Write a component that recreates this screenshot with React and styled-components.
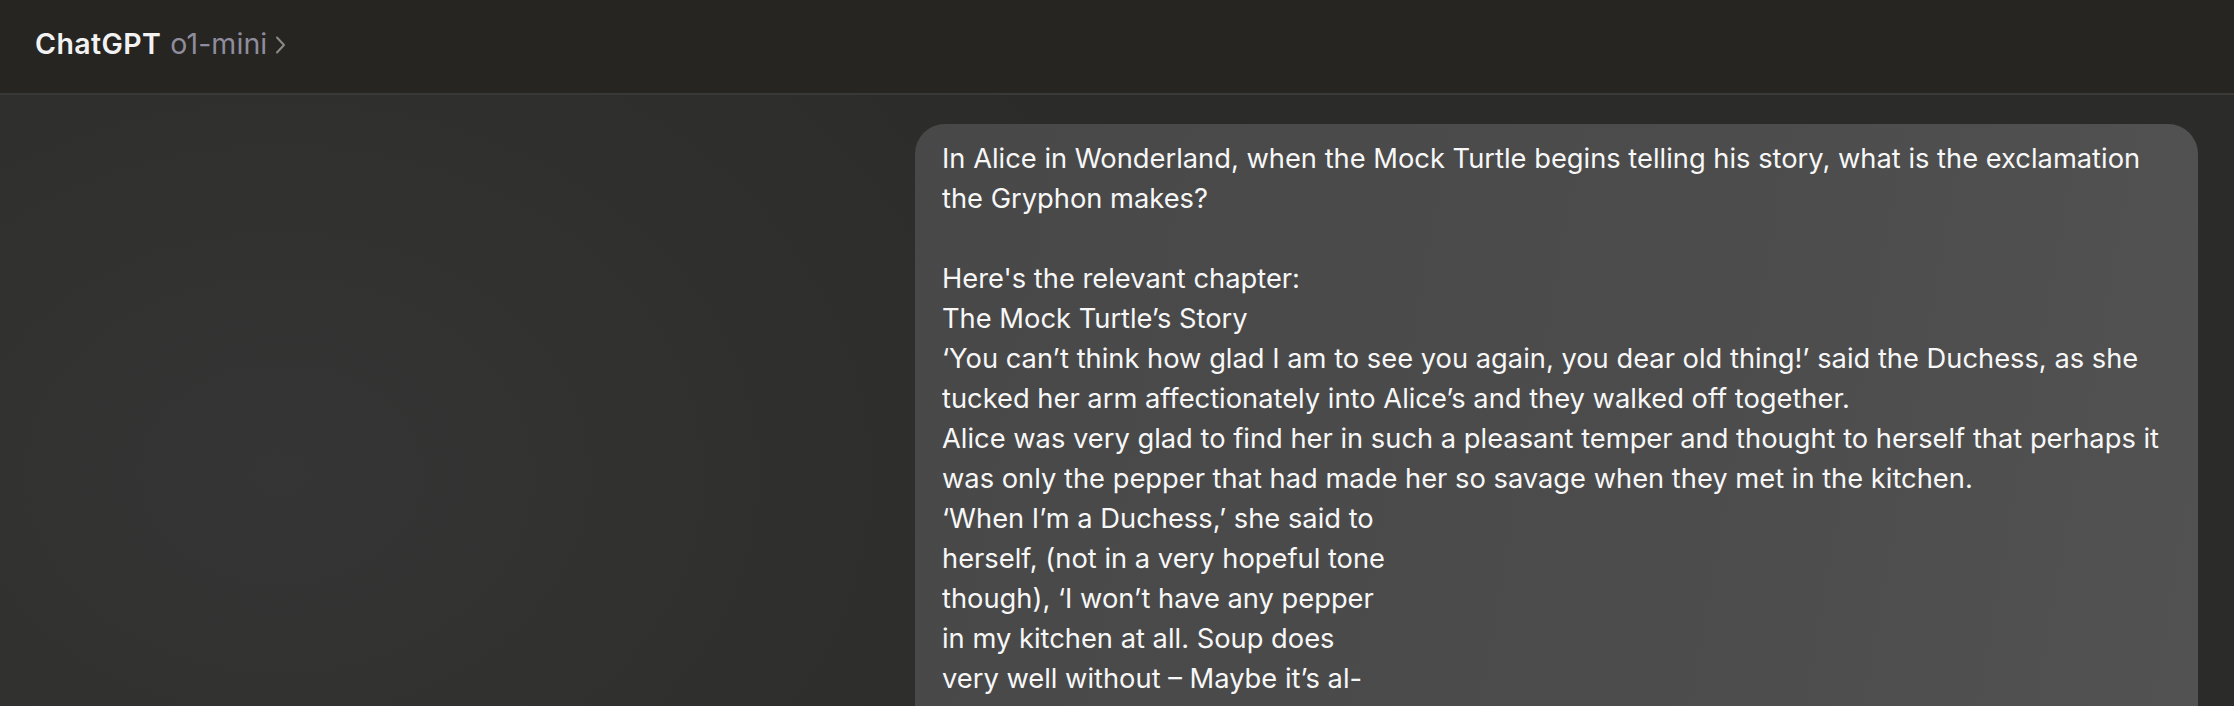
import React from "react";
import styled, { createGlobalStyle } from "styled-components";

const Global = createGlobalStyle`
  html, body { margin: 0; padding: 0; background: #2d2d2b; }
  body { font-family: Inter, "Noto Sans", sans-serif; -webkit-font-smoothing: antialiased; }
  #root { width: 2234px; height: 706px; overflow: hidden; }
`;

const Page = styled.div`
  width: 2234px;
  height: 706px;
  display: flex;
  flex-direction: column;
  overflow: hidden;
`;

const TopBar = styled.header`
  height: 95px;
  flex: none;
  display: flex;
  align-items: flex-start;
  padding: 27px 35px 0;
  background: #262522;
  border-bottom: 2px solid #393937;
  box-sizing: border-box;
`;

const Title = styled.span`
  font-size: 28.5px;
  line-height: 34px;
  font-weight: 600;
  color: #f2f2f2;
  letter-spacing: 0.4px;
`;

const Model = styled.span`
  margin-left: 9px;
  font-size: 28.5px;
  line-height: 34px;
  font-weight: 400;
  color: #8f8d9d;
  letter-spacing: 0.1px;
`;

const Chevron = styled.svg`
  margin-left: 8px;
  margin-top: 9px;
  width: 11px;
  height: 18px;
`;

const Body = styled.main`
  flex: 1;
  display: flex;
  justify-content: flex-end;
  align-items: flex-start;
  padding: 29px 36px 0 0;
  background: radial-gradient(ellipse 900px 700px at 280px 380px, #353535 0%, #2f2f2e 60%, #2b2b29 100%);
`;

const Bubble = styled.div`
  width: 1283px;
  box-sizing: border-box;
  padding: 15px 27px 40px 27px;
  border-radius: 30px;
  background: linear-gradient(100deg, #484848 0%, #4c4c4c 60%, #525252 100%);
  color: #f7f7f7;
  font-size: 27.3px;
  line-height: 40px;
  white-space: pre-wrap;
`;

const Para = styled.p`
  margin: 0;
`;

const Gap = styled.div`
  height: 40px;
`;

export default function App() {
  return (
    <Page>
      <Global />
      <TopBar>
        <Title>ChatGPT</Title>
        <Model>o1-mini</Model>
        <Chevron viewBox="0 0 11 18" fill="none">
          <path d="M2 1.5l7 7.5-7 7.5" stroke="#8a8a8a" strokeWidth="2" strokeLinecap="round" strokeLinejoin="round" />
        </Chevron>
      </TopBar>
      <Body>
        <Bubble>
          <Para>In Alice in Wonderland, when the Mock Turtle begins telling his story, what is the exclamation{"\n"}the Gryphon makes?</Para>
          <Gap />
          <Para>Here's the relevant chapter:</Para>
          <Para>The Mock Turtle’s Story</Para>
          <Para>‘You can’t think how glad I am to see you again, you dear old thing!’ said the Duchess, as she{"\n"}tucked her arm affectionately into Alice’s and they walked off together.</Para>
          <Para>Alice was very glad to find her in such a pleasant temper and thought to herself that perhaps it{"\n"}was only the pepper that had made her so savage when they met in the kitchen.</Para>
          <Para>‘When I’m a Duchess,’ she said to{"\n"}herself, (not in a very hopeful tone{"\n"}though), ‘I won’t have any pepper{"\n"}in my kitchen at all. Soup does{"\n"}very well without – Maybe it’s al-</Para>
        </Bubble>
      </Body>
    </Page>
  );
}
